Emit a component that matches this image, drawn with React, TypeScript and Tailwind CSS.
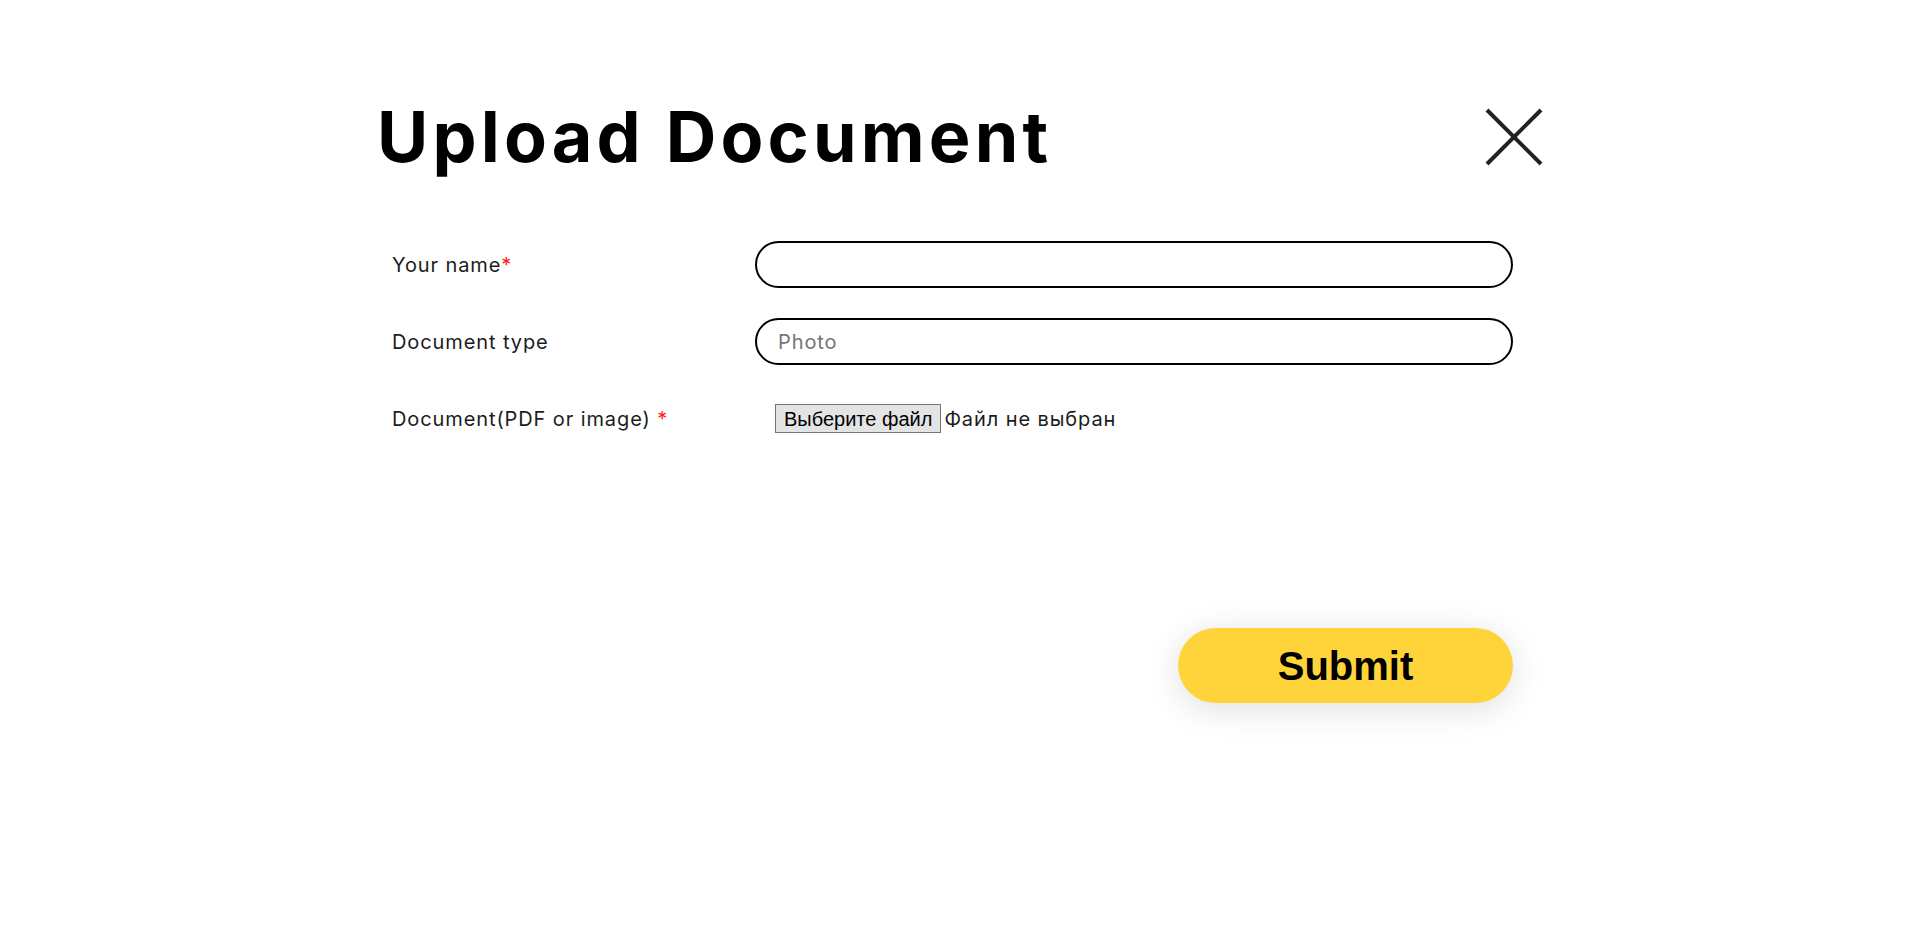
import React from "react";

const sans = "font-['Inter',sans-serif] tracking-[0.9px]";
const arial = "font-['Liberation_Sans',Arial,sans-serif]";

function CloseIcon() {
  return (
    <svg width="58" height="58" viewBox="0 0 58 58" fill="none" stroke="#222" strokeWidth="4">
      <line x1="2" y1="2" x2="56" y2="56" />
      <line x1="56" y1="2" x2="2" y2="56" />
    </svg>
  );
}

function Label({ text, required, spaced }: { text: string; required?: boolean; spaced?: boolean }) {
  return (
    <label className={`text-[20px] text-[#1c1c1c] ${sans}`}>
      {text}
      {required && <span className="text-[#ff1a1a]">{spaced ? " *" : "*"}</span>}
    </label>
  );
}

export default function App() {
  return (
    <div className="min-h-[938px] w-full bg-white">
      <div className="mx-auto w-[1170px] pt-[102px]">
        <div className="flex items-center justify-between">
          <h1 className="pl-[2px] font-['Inter',sans-serif] text-[70px] font-bold leading-[70px] tracking-[4.2px] text-black">
            Upload Document
          </h1>
          <button className="mr-[2px] cursor-pointer">
            <CloseIcon />
          </button>
        </div>

        <form className="mt-[69px] pl-[17px] pr-[32px]">
          <div className="grid grid-cols-[363px_1fr] gap-y-[30px]">
            <div className="flex h-[47px] items-center">
              <Label text="Your name" required />
            </div>
            <input
              type="text"
              className={`h-[47px] w-full rounded-full border-2 border-black px-[21px] text-[20px] outline-none ${sans}`}
            />

            <div className="flex h-[47px] items-center">
              <Label text="Document type" />
            </div>
            <input
              type="text"
              placeholder="Photo"
              className={`h-[47px] w-full rounded-full border-2 border-black px-[21px] text-[20px] outline-none placeholder:text-[#757575] ${sans}`}
            />

            <div className="flex h-[47px] items-center">
              <Label text="Document(PDF or image)" required spaced />
            </div>
            <div className="flex h-[47px] items-center pl-[20px]">
              <span
                className={`flex h-[29px] items-center border border-[#767676] bg-[#e4e4e4] px-[8px] text-[20px] text-black ${arial}`}
              >
                Выберите файл
              </span>
              <span className={`ml-[3px] text-[20px] text-[#1c1c1c] ${sans}`}>Файл не выбран</span>
            </div>
          </div>

          <div className="mt-[186px] flex justify-end">
            <button
              type="button"
              className={`h-[75px] w-[335px] rounded-full bg-[#ffd43b] text-[40px] font-bold text-black shadow-[0_6px_34px_rgba(0,0,0,0.13)] ${arial}`}
            >
              Submit
            </button>
          </div>
        </form>
      </div>
    </div>
  );
}
